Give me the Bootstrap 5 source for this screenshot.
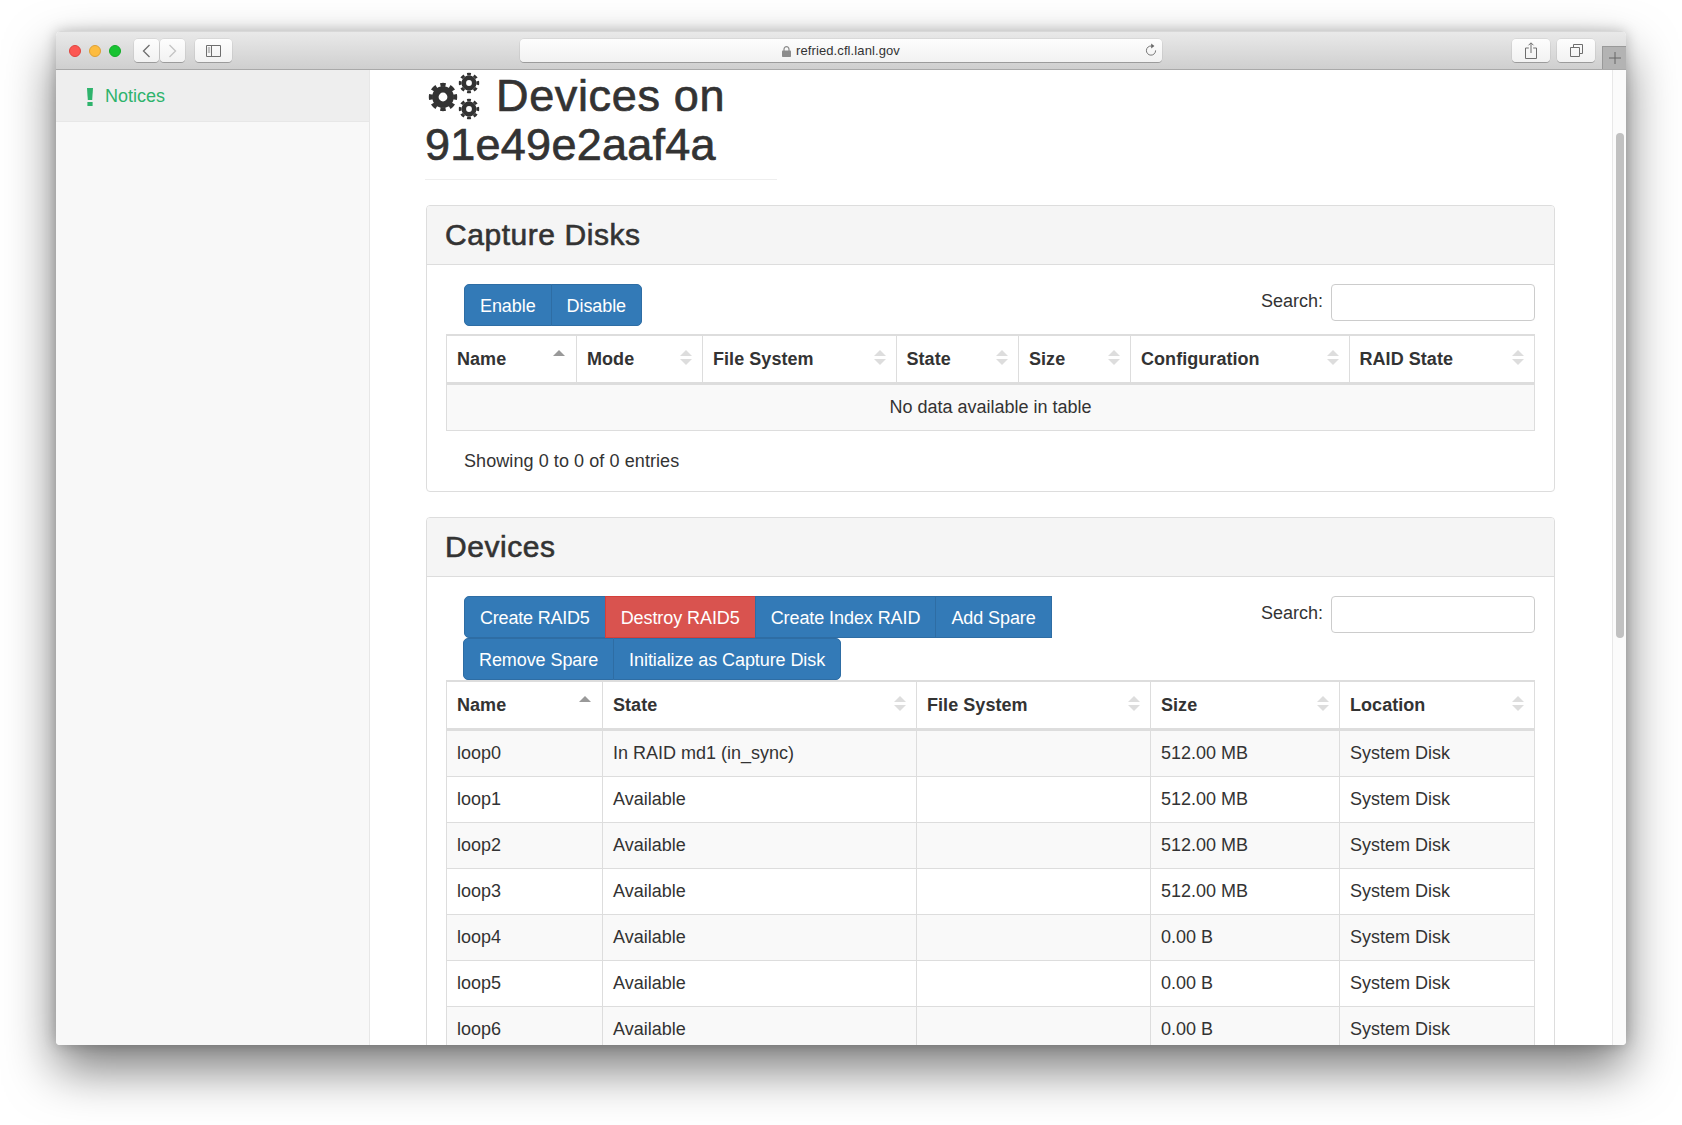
<!DOCTYPE html>
<html lang="en">
<head>
<meta charset="utf-8">
<title>Devices on 91e49e2aaf4a</title>
<link href="https://cdn.jsdelivr.net/npm/bootstrap@5.3.0/dist/css/bootstrap.min.css" rel="stylesheet">
<style>
html,body{height:100%;overflow:hidden;background:#fff}
body{font-family:"Liberation Sans",Arial,sans-serif;font-size:18px;line-height:1.42857;color:#333}
.mac-win{margin:31px 0 0 56px;width:1570px;height:1014px;border-radius:5px 5px 4px 4px;overflow:hidden;box-shadow:0 24px 50px rgba(0,0,0,.52),0 0 14px rgba(0,0,0,.22);background:#fff}
.mac-bar{height:39px;flex:none;padding-left:13px;background:linear-gradient(#e9e9e9,#cfcfcf);border-bottom:1px solid #a9a9a9;border-top:1px solid #d8d8d8}
.light{width:12px;height:12px;border-radius:50%;margin-right:8px;flex:none}
.l-r{background:#fc5753;border:1px solid #e0443e}
.l-y{background:#fdbc40;border:1px solid #dea034}
.l-g{background:#18c332;border:1px solid #12ac28}
.tb{height:23px;background:linear-gradient(#fdfdfd,#f2f2f2);border-radius:4px;box-shadow:0 0 0 .5px rgba(0,0,0,.1),0 1px 0 rgba(0,0,0,.22);flex:none}
.tb-nav{width:25px;margin-right:1px}
.tb-first{margin-left:5px}
.tb-side{width:37px;margin-left:9px}
.tb-url{width:642px;margin-left:288px;padding-top:2px;font-size:13px;letter-spacing:.1px;color:#333;position:relative}
.url-lock{margin-right:5px}
.url-reload{position:absolute;right:5px;top:4px}
.tb-share{width:38px;margin-left:350px}
.tb-tabs{width:38px;margin-left:7px}
.tb-plus{width:24px;height:23px;margin-left:7px;align-self:flex-end;background:#b3b3b3;border-left:1px solid #999;border-top:1px solid #999}
.mac-body{height:975px;min-height:0}
.side-col{width:314px;flex:none;background:#f8f8f8;border-right:1px solid #e7e7e7}
.side-link{height:52px;padding:2px 0 0 31px;background:#eee;border-bottom:1px solid #e7e7e7;color:#2eb36c;gap:12px}
.main-col{width:1242px;flex:none;padding:1px 57px 0 56px;overflow:hidden}
.sb-col{width:14px;flex:none;background:#fbfbfb;border-left:1px solid #e8e8e8;padding:63px 0 0 3px}
.sb-thumb{width:8px;height:505px;border-radius:4px;background:#c1c1c1}
.dev-title{width:352px;margin:0 0 25px -1px;padding-bottom:11px;border-bottom:1px solid #eee;font-size:45px;line-height:49px;font-weight:400;letter-spacing:.25px;-webkit-text-stroke:.7px #333;color:#333;height:109px}
.title-a{letter-spacing:.65px}
.cog-svg{width:52px;height:46px;margin:0 15px 0 4px;vertical-align:-9px;overflow:visible}
.dev-panel{margin-bottom:25px;border:1px solid #ddd;border-radius:4px;--bs-card-bg:#fff}
.dev-head{height:59px;padding:0 18px;background:#f5f5f5;border-bottom:1px solid #ddd;border-radius:3px 3px 0 0!important}
.dev-head h3{margin:0;font-size:30px;line-height:57px;font-weight:400;letter-spacing:.55px;-webkit-text-stroke:.6px #333;color:#333}
.dev-body{padding:19px 19px 0}
.dev-tools{margin-left:18px;margin-bottom:8px}
.dev-tools2{margin-bottom:0}
.dev-btn{--bs-btn-color:#fff;font-size:18px;line-height:26px;padding:8px 15px 6px;letter-spacing:-.08px;border-radius:5px;background:#337ab7;border-color:#2e6da4}
.dev-btn-tight{letter-spacing:-.2px}
.dev-btn-red{background:#d9534f;border-color:#d43f3a}
.grp-shift{margin-left:-1px}
.dev-search{gap:8px}
.dev-search label{margin:0;position:relative;top:-1px}
.dev-search input{width:204px;height:37px;border:1px solid #ccc;border-radius:4px;padding:6px 12px;box-shadow:none}
.dev-table{table-layout:fixed;width:1088px;margin:0;font-size:18px;border-color:#ddd;--bs-table-color:#333;--bs-table-striped-color:#333;--bs-table-striped-bg:#f9f9f9;--bs-table-border-color:#ddd;border-top:2px solid #ddd}
.dev-table>:not(caption)>*>*{padding:10px;line-height:25px;border-color:#ddd}
.dev-table>thead>tr>th{position:relative;padding:10px;line-height:26px;border-bottom:3px solid #ddd;font-weight:700;letter-spacing:.05px}
.dev-table>tbody{border-top:0}
.sort-ic{position:absolute;right:10px;top:14px;width:12px;height:15px}
.sort-ic::before,.sort-ic::after{content:"";position:absolute;left:0;border-left:6px solid transparent;border-right:6px solid transparent}
.sort-ic::before{top:0;border-bottom:6px solid #ddd}
.sort-ic::after{bottom:0;border-top:6px solid #ddd}
.sort-up{right:11px}
.sort-up::before{border-bottom-color:#999}
.sort-up::after{display:none}
.dev-info{height:60px;padding:17px 0 0 18px;line-height:26px;letter-spacing:.08px}
.c1a{width:130px}.c1b{width:126px}.c1c{width:193.5px}.c1d{width:122.5px}.c1e{width:112px}.c1f{width:218.5px}.c1g{width:185.5px}
.c2a{width:156px}.c2b{width:314px}.c2c{width:234px}.c2d{width:189px}.c2e{width:195px}
</style>
</head>
<body>
<div class="mac-win d-flex flex-column">
  <div class="mac-bar d-flex align-items-center">
    <span class="light l-r"></span><span class="light l-y"></span><span class="light l-g"></span>
    <div class="tb tb-nav tb-first d-flex align-items-center justify-content-center">
      <svg width="9" height="14" viewBox="0 0 9 14"><path d="M7.5 1 1.5 7l6 6" fill="none" stroke="#6e6e6e" stroke-width="1.3"/></svg>
    </div>
    <div class="tb tb-nav d-flex align-items-center justify-content-center">
      <svg width="9" height="14" viewBox="0 0 9 14"><path d="M1.5 1l6 6-6 6" fill="none" stroke="#c4c4c4" stroke-width="1.3"/></svg>
    </div>
    <div class="tb tb-side d-flex align-items-center justify-content-center">
      <svg width="15" height="12" viewBox="0 0 15 12"><path d="M.5.5h14v11H.5zM5.5.5v11" fill="none" stroke="#6e6e6e"/><path d="M1.8 3h2.4M1.8 5h2.4M1.8 7h2.4" stroke="#8a8a8a"/></svg>
    </div>
    <div class="tb tb-url d-flex align-items-center justify-content-center">
      <svg class="url-lock" width="9" height="11" viewBox="0 0 9 11"><path d="M2 5V3.2a2.5 2.5 0 0 1 5 0V5" fill="none" stroke="#8c8c8c" stroke-width="1.2"/><rect y="4.6" width="9" height="6.4" rx=".8" fill="#8c8c8c"/></svg>
      <span>refried.cfl.lanl.gov</span>
      <svg class="url-reload" width="12" height="14" viewBox="0 0 12 14"><path d="M6.6 3A4.6 4.6 0 1 0 10.6 7.4" fill="none" stroke="#777" stroke-width="1"/><path d="M6.2.6 9.4 3 6.2 5.4z" fill="#666"/></svg>
    </div>
    <div class="tb tb-share d-flex align-items-center justify-content-center">
      <svg width="12" height="17" viewBox="0 0 12 17"><path d="M3.8 6H.5v10.5h11V6H8.2M6 11V1M3.5 3.3 6 .8l2.5 2.5" fill="none" stroke="#6e6e6e"/></svg>
    </div>
    <div class="tb tb-tabs d-flex align-items-center justify-content-center">
      <svg width="13" height="13" viewBox="0 0 13 13"><path d="M.5 3.5h9v9h-9zM3.5 3.5v-3h9v9h-3" fill="none" stroke="#6e6e6e"/></svg>
    </div>
    <div class="tb-plus d-flex align-items-center justify-content-center">
      <svg width="12" height="12" viewBox="0 0 12 12"><path d="M6 0v12M0 6h12" stroke="#666"/></svg>
    </div>
  </div>
  <div class="mac-body d-flex">
    <nav class="side-col">
      <div class="side-link d-flex align-items-center">
        <svg width="6" height="18" viewBox="0 0 6 18"><path d="M0 0h6l-.8 12H.8z" fill="#2eb36c"/><rect x=".4" y="14" width="5.2" height="4" fill="#2eb36c"/></svg>
        <span>Notices</span>
      </div>
    </nav>
    <main class="main-col">
      <h1 class="dev-title"><svg class="cog-svg" viewBox="0 0 52 46"><g fill="none" stroke="#333">
        <circle cx="14" cy="23" r="7.6" stroke-width="6.4"/>
        <circle cx="14" cy="23" r="12.2" stroke-width="4" pathLength="80" stroke-dasharray="5.6 4.4" stroke-dashoffset="2.8"/>
        <circle cx="40" cy="9" r="5.2" stroke-width="4.6"/>
        <circle cx="40" cy="9" r="8.8" stroke-width="2.8" pathLength="80" stroke-dasharray="5.6 4.4" stroke-dashoffset="2.8"/>
        <circle cx="40" cy="35" r="5.2" stroke-width="4.6"/>
        <circle cx="40" cy="35" r="8.8" stroke-width="2.8" pathLength="80" stroke-dasharray="5.6 4.4" stroke-dashoffset="2.8"/>
      </g></svg><span class="title-a">Devices on</span> 91e49e2aaf4a</h1>

      <section class="card dev-panel">
        <div class="card-header dev-head"><h3>Capture Disks</h3></div>
        <div class="card-body dev-body">
          <div class="d-flex justify-content-between align-items-start">
            <div class="dev-tools btn-group">
              <button class="btn btn-primary dev-btn">Enable</button>
              <button class="btn btn-primary dev-btn">Disable</button>
            </div>
            <div class="dev-search d-flex align-items-center"><label>Search:</label><input class="form-control" type="search" aria-label="Search"></div>
          </div>
          <table class="table table-bordered table-striped dev-table">
            <colgroup><col class="c1a"><col class="c1b"><col class="c1c"><col class="c1d"><col class="c1e"><col class="c1f"><col class="c1g"></colgroup>
            <thead><tr>
              <th>Name<span class="sort-ic sort-up"></span></th>
              <th>Mode<span class="sort-ic"></span></th>
              <th>File System<span class="sort-ic"></span></th>
              <th>State<span class="sort-ic"></span></th>
              <th>Size<span class="sort-ic"></span></th>
              <th>Configuration<span class="sort-ic"></span></th>
              <th>RAID State<span class="sort-ic"></span></th>
            </tr></thead>
            <tbody><tr><td colspan="7" class="text-center">No data available in table</td></tr></tbody>
          </table>
          <div class="dev-info">Showing 0 to 0 of 0 entries</div>
        </div>
      </section>

      <section class="card dev-panel">
        <div class="card-header dev-head"><h3>Devices</h3></div>
        <div class="card-body dev-body">
          <div class="d-flex justify-content-between align-items-start">
            <div class="dev-tools dev-tools2 d-flex flex-column align-items-start">
              <div class="btn-group">
                <button class="btn btn-primary dev-btn dev-btn-tight">Create RAID5</button>
                <button class="btn btn-danger dev-btn dev-btn-red">Destroy RAID5</button>
                <button class="btn btn-primary dev-btn">Create Index RAID</button>
                <button class="btn btn-primary dev-btn rounded-end-0">Add Spare</button>
              </div>
              <div class="btn-group grp-shift">
                <button class="btn btn-primary dev-btn">Remove Spare</button>
                <button class="btn btn-primary dev-btn">Initialize as Capture Disk</button>
              </div>
            </div>
            <div class="dev-search d-flex align-items-center"><label>Search:</label><input class="form-control" type="search" aria-label="Search"></div>
          </div>
          <table class="table table-bordered table-striped dev-table">
            <colgroup><col class="c2a"><col class="c2b"><col class="c2c"><col class="c2d"><col class="c2e"></colgroup>
            <thead><tr>
              <th>Name<span class="sort-ic sort-up"></span></th>
              <th>State<span class="sort-ic"></span></th>
              <th>File System<span class="sort-ic"></span></th>
              <th>Size<span class="sort-ic"></span></th>
              <th>Location<span class="sort-ic"></span></th>
            </tr></thead>
            <tbody>
              <tr><td>loop0</td><td>In RAID md1 (in_sync)</td><td></td><td>512.00 MB</td><td>System Disk</td></tr>
              <tr><td>loop1</td><td>Available</td><td></td><td>512.00 MB</td><td>System Disk</td></tr>
              <tr><td>loop2</td><td>Available</td><td></td><td>512.00 MB</td><td>System Disk</td></tr>
              <tr><td>loop3</td><td>Available</td><td></td><td>512.00 MB</td><td>System Disk</td></tr>
              <tr><td>loop4</td><td>Available</td><td></td><td>0.00 B</td><td>System Disk</td></tr>
              <tr><td>loop5</td><td>Available</td><td></td><td>0.00 B</td><td>System Disk</td></tr>
              <tr><td>loop6</td><td>Available</td><td></td><td>0.00 B</td><td>System Disk</td></tr>
            </tbody>
          </table>
        </div>
      </section>
    </main>
    <div class="sb-col"><div class="sb-thumb"></div></div>
  </div>
</div>
<script src="https://cdn.jsdelivr.net/npm/bootstrap@5.3.0/dist/js/bootstrap.bundle.min.js"></script>
</body>
</html>
